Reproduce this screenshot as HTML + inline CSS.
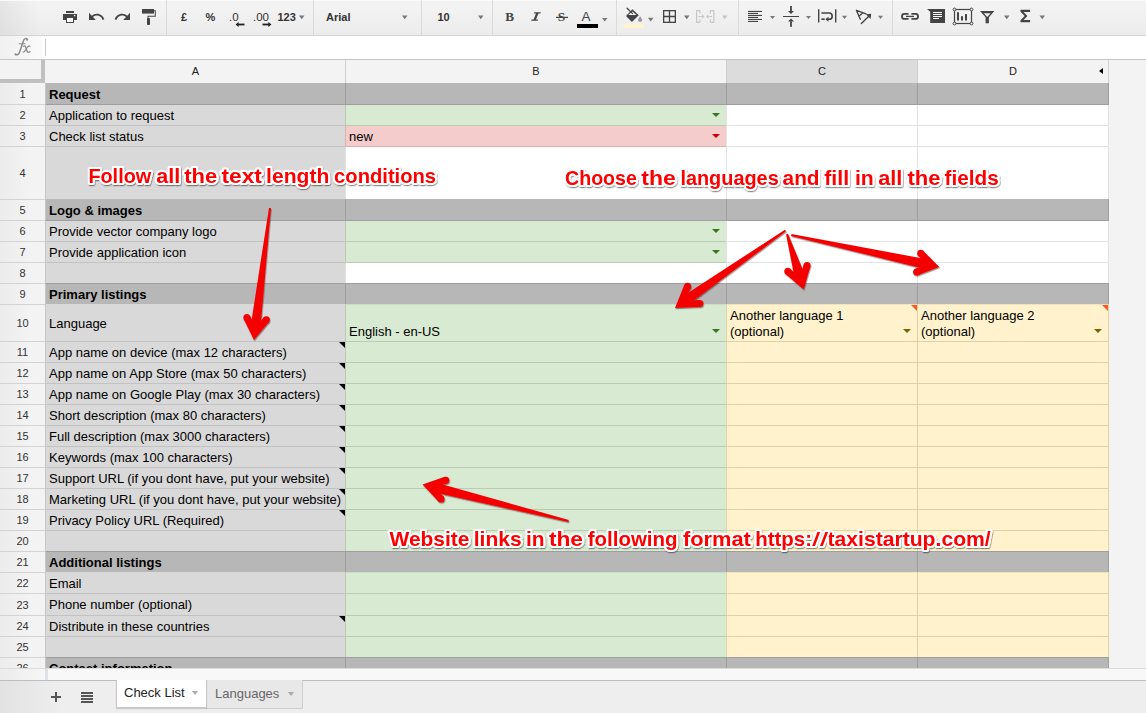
<!DOCTYPE html><html><head><meta charset="utf-8"><style>
*{margin:0;padding:0;box-sizing:border-box}
html,body{width:1146px;height:713px;overflow:hidden;background:#fff;font-family:"Liberation Sans",sans-serif;color:#000}
.a{position:absolute}
.c{position:absolute;overflow:visible;white-space:nowrap}
.t{position:absolute;white-space:nowrap;font-size:13px;line-height:15px}
.rh{position:absolute;left:0;width:45px;text-align:center;font-size:11px;color:#333;line-height:13px}
.ch{position:absolute;top:65px;text-align:center;font-size:11px;color:#222;line-height:13px}
.ann{position:absolute;white-space:nowrap;font-weight:bold;font-size:20px;line-height:24px;color:#f00;
 text-shadow:-1px -1px 0 #fff,1px -1px 0 #fff,-1px 1px 0 #fff,1px 1px 0 #fff,0 -2px 0 #fff,0 2px 0 #fff,-2px 0 0 #fff,2px 0 0 #fff,1px 3px 1px rgba(0,0,0,.35)}
.tb{position:absolute;top:11px;font-size:11px;font-weight:bold;color:#333;line-height:13px}
.dd{position:absolute;width:0;height:0;border-left:3px solid transparent;border-right:3px solid transparent;border-top:3px solid #777}
</style></head><body>

<div class="a" style="left:0;top:0;width:1146px;height:35px;background:linear-gradient(to right,rgba(0,0,0,.06) 0,rgba(0,0,0,0) 40px),linear-gradient(to bottom,#f4f4f4,#ececec)"></div>
<div class="a" style="left:0;top:0;width:1146px;height:1px;background:#fafafa"></div>
<div class="a" style="left:0;top:35px;width:1146px;height:1px;background:#d4d4d4"></div>
<div class="a" style="left:166px;top:0;width:1px;height:35px;background:#dadada"></div>
<div class="a" style="left:313px;top:0;width:1px;height:35px;background:#dadada"></div>
<div class="a" style="left:421px;top:0;width:1px;height:35px;background:#dadada"></div>
<div class="a" style="left:492px;top:0;width:1px;height:35px;background:#dadada"></div>
<div class="a" style="left:616px;top:0;width:1px;height:35px;background:#dadada"></div>
<div class="a" style="left:738px;top:0;width:1px;height:35px;background:#dadada"></div>
<div class="a" style="left:892px;top:0;width:1px;height:35px;background:#dadada"></div>
<div class="a" style="left:0;top:36px;width:1146px;height:23px;background:#fff"></div>
<div class="a" style="left:0;top:36px;width:42px;height:23px;background:linear-gradient(to right,#f0f0f0,#fbfbfb)"></div>
<div class="a" style="left:0;top:59px;width:1146px;height:1px;background:#c6c6c6"></div>
<div class="a" style="left:45px;top:39px;width:1px;height:17px;background:#c8c8c8"></div>
<svg class="a" style="left:0;top:36px" width="45" height="23" viewBox="0 36 45 23"><g fill="none" stroke="#8c8c8c" stroke-linecap="round"><path d="M27.3 39.4C26.4 37.9 24.3 38.2 23.2 41.4L19.9 51.2C19 54.2 17.4 55.5 15.5 54.5" stroke-width="1.5"/><path d="M19.2 43.7H25" stroke-width="1.1"/><path d="M23.5 46.2C24.9 45.3 25.6 46.4 26.1 48.1L26.9 50.8C27.4 52.5 28.6 52.9 30 51.6" stroke-width="1.3"/><path d="M30 46.4C29.4 45.5 28.4 45.9 27.3 47.4L25.3 50.4C24.5 51.7 23.8 52.6 23 51.9" stroke-width="1.1"/></g><circle cx="27.2" cy="39.7" r="1" fill="#8c8c8c"/><circle cx="15.5" cy="54.3" r="1" fill="#8c8c8c"/></svg>
<div class="a" style="left:0;top:60px;width:1146px;height:23px;background:#f3f3f3"></div>
<div class="a" style="left:727px;top:60px;width:190px;height:23px;background:#dcdcdc"></div>
<div class="a" style="left:345px;top:60px;width:1px;height:23px;background:#cfcfcf"></div>
<div class="a" style="left:726px;top:60px;width:1px;height:23px;background:#cfcfcf"></div>
<div class="a" style="left:917px;top:60px;width:1px;height:23px;background:#cfcfcf"></div>
<div class="a" style="left:1108px;top:60px;width:1px;height:23px;background:#cfcfcf"></div>
<div class="ch" style="left:46px;width:299px">A</div>
<div class="ch" style="left:346px;width:380px">B</div>
<div class="ch" style="left:727px;width:190px">C</div>
<div class="ch" style="left:918px;width:190px">D</div>
<div class="a" style="left:1099px;top:68px;width:0;height:0;border-top:3.5px solid transparent;border-bottom:3.5px solid transparent;border-right:4px solid #000"></div>
<div class="a" style="left:0;top:83px;width:45px;height:585px;background:linear-gradient(to right,#ececec 0,#f3f3f3 30px)"></div>
<div class="a" style="left:45px;top:83px;width:1px;height:585px;background:#c6c6c6"></div>
<div class="a" style="left:1109px;top:60px;width:37px;height:608px;background:#f3f3f3"></div>
<div class="a" style="left:1108px;top:60px;width:1px;height:608px;background:#d0d0d0"></div>
<div class="a" style="left:46px;top:83px;width:299px;height:21px;background:#b7b7b7"></div>
<div class="a" style="left:46px;top:104px;width:299px;height:1px;background:#9e9e9e"></div>
<div class="a" style="left:345px;top:83px;width:381px;height:21px;background:#b7b7b7"></div>
<div class="a" style="left:345px;top:83px;width:1px;height:21px;background:#9e9e9e"></div>
<div class="a" style="left:345px;top:104px;width:381px;height:1px;background:#9e9e9e"></div>
<div class="a" style="left:726px;top:83px;width:191px;height:21px;background:#b7b7b7"></div>
<div class="a" style="left:726px;top:83px;width:1px;height:21px;background:#9e9e9e"></div>
<div class="a" style="left:726px;top:104px;width:191px;height:1px;background:#9e9e9e"></div>
<div class="a" style="left:917px;top:83px;width:191px;height:21px;background:#b7b7b7"></div>
<div class="a" style="left:917px;top:83px;width:1px;height:21px;background:#9e9e9e"></div>
<div class="a" style="left:1108px;top:83px;width:1px;height:21px;background:#9e9e9e"></div>
<div class="a" style="left:1108px;top:104px;width:1px;height:1px;background:#9e9e9e"></div>
<div class="a" style="left:917px;top:104px;width:191px;height:1px;background:#9e9e9e"></div>
<div class="a" style="left:46px;top:105px;width:299px;height:20px;background:#d9d9d9"></div>
<div class="a" style="left:46px;top:125px;width:299px;height:1px;background:#c2c2c2"></div>
<div class="a" style="left:345px;top:105px;width:381px;height:20px;background:#d9ead3"></div>
<div class="a" style="left:345px;top:105px;width:1px;height:20px;background:#b9ccb3"></div>
<div class="a" style="left:345px;top:125px;width:381px;height:1px;background:#b9ccb3"></div>
<div class="a" style="left:726px;top:105px;width:191px;height:20px;background:#ffffff"></div>
<div class="a" style="left:726px;top:105px;width:1px;height:20px;background:#e2e3e3"></div>
<div class="a" style="left:726px;top:125px;width:191px;height:1px;background:#e2e3e3"></div>
<div class="a" style="left:917px;top:105px;width:191px;height:20px;background:#ffffff"></div>
<div class="a" style="left:917px;top:105px;width:1px;height:20px;background:#e2e3e3"></div>
<div class="a" style="left:1108px;top:105px;width:1px;height:20px;background:#e2e3e3"></div>
<div class="a" style="left:1108px;top:125px;width:1px;height:1px;background:#e2e3e3"></div>
<div class="a" style="left:917px;top:125px;width:191px;height:1px;background:#e2e3e3"></div>
<div class="a" style="left:46px;top:126px;width:299px;height:20px;background:#d9d9d9"></div>
<div class="a" style="left:46px;top:146px;width:299px;height:1px;background:#c2c2c2"></div>
<div class="a" style="left:345px;top:126px;width:381px;height:20px;background:#f4cccc"></div>
<div class="a" style="left:345px;top:126px;width:1px;height:20px;background:#d9b0b0"></div>
<div class="a" style="left:345px;top:146px;width:381px;height:1px;background:#d9b0b0"></div>
<div class="a" style="left:726px;top:126px;width:191px;height:20px;background:#ffffff"></div>
<div class="a" style="left:726px;top:126px;width:1px;height:20px;background:#e2e3e3"></div>
<div class="a" style="left:726px;top:146px;width:191px;height:1px;background:#e2e3e3"></div>
<div class="a" style="left:917px;top:126px;width:191px;height:20px;background:#ffffff"></div>
<div class="a" style="left:917px;top:126px;width:1px;height:20px;background:#e2e3e3"></div>
<div class="a" style="left:1108px;top:126px;width:1px;height:20px;background:#e2e3e3"></div>
<div class="a" style="left:1108px;top:146px;width:1px;height:1px;background:#e2e3e3"></div>
<div class="a" style="left:917px;top:146px;width:191px;height:1px;background:#e2e3e3"></div>
<div class="a" style="left:46px;top:147px;width:299px;height:52px;background:#d9d9d9"></div>
<div class="a" style="left:345px;top:147px;width:381px;height:52px;background:#ffffff"></div>
<div class="a" style="left:345px;top:147px;width:1px;height:52px;background:#e2e3e3"></div>
<div class="a" style="left:726px;top:147px;width:191px;height:52px;background:#ffffff"></div>
<div class="a" style="left:726px;top:147px;width:1px;height:52px;background:#e2e3e3"></div>
<div class="a" style="left:917px;top:147px;width:191px;height:52px;background:#ffffff"></div>
<div class="a" style="left:917px;top:147px;width:1px;height:52px;background:#e2e3e3"></div>
<div class="a" style="left:1108px;top:147px;width:1px;height:52px;background:#e2e3e3"></div>
<div class="a" style="left:46px;top:199px;width:299px;height:21px;background:#b7b7b7"></div>
<div class="a" style="left:46px;top:220px;width:299px;height:1px;background:#9e9e9e"></div>
<div class="a" style="left:345px;top:199px;width:381px;height:21px;background:#b7b7b7"></div>
<div class="a" style="left:345px;top:199px;width:1px;height:21px;background:#9e9e9e"></div>
<div class="a" style="left:345px;top:220px;width:381px;height:1px;background:#9e9e9e"></div>
<div class="a" style="left:726px;top:199px;width:191px;height:21px;background:#b7b7b7"></div>
<div class="a" style="left:726px;top:199px;width:1px;height:21px;background:#9e9e9e"></div>
<div class="a" style="left:726px;top:220px;width:191px;height:1px;background:#9e9e9e"></div>
<div class="a" style="left:917px;top:199px;width:191px;height:21px;background:#b7b7b7"></div>
<div class="a" style="left:917px;top:199px;width:1px;height:21px;background:#9e9e9e"></div>
<div class="a" style="left:1108px;top:199px;width:1px;height:21px;background:#9e9e9e"></div>
<div class="a" style="left:1108px;top:220px;width:1px;height:1px;background:#9e9e9e"></div>
<div class="a" style="left:917px;top:220px;width:191px;height:1px;background:#9e9e9e"></div>
<div class="a" style="left:46px;top:221px;width:299px;height:20px;background:#d9d9d9"></div>
<div class="a" style="left:46px;top:241px;width:299px;height:1px;background:#c2c2c2"></div>
<div class="a" style="left:345px;top:221px;width:381px;height:20px;background:#d9ead3"></div>
<div class="a" style="left:345px;top:221px;width:1px;height:20px;background:#b9ccb3"></div>
<div class="a" style="left:345px;top:241px;width:381px;height:1px;background:#b9ccb3"></div>
<div class="a" style="left:726px;top:221px;width:191px;height:20px;background:#ffffff"></div>
<div class="a" style="left:726px;top:221px;width:1px;height:20px;background:#e2e3e3"></div>
<div class="a" style="left:726px;top:241px;width:191px;height:1px;background:#e2e3e3"></div>
<div class="a" style="left:917px;top:221px;width:191px;height:20px;background:#ffffff"></div>
<div class="a" style="left:917px;top:221px;width:1px;height:20px;background:#e2e3e3"></div>
<div class="a" style="left:1108px;top:221px;width:1px;height:20px;background:#e2e3e3"></div>
<div class="a" style="left:1108px;top:241px;width:1px;height:1px;background:#e2e3e3"></div>
<div class="a" style="left:917px;top:241px;width:191px;height:1px;background:#e2e3e3"></div>
<div class="a" style="left:46px;top:242px;width:299px;height:20px;background:#d9d9d9"></div>
<div class="a" style="left:46px;top:262px;width:299px;height:1px;background:#c2c2c2"></div>
<div class="a" style="left:345px;top:242px;width:381px;height:20px;background:#d9ead3"></div>
<div class="a" style="left:345px;top:242px;width:1px;height:20px;background:#b9ccb3"></div>
<div class="a" style="left:345px;top:262px;width:381px;height:1px;background:#b9ccb3"></div>
<div class="a" style="left:726px;top:242px;width:191px;height:20px;background:#ffffff"></div>
<div class="a" style="left:726px;top:242px;width:1px;height:20px;background:#e2e3e3"></div>
<div class="a" style="left:726px;top:262px;width:191px;height:1px;background:#e2e3e3"></div>
<div class="a" style="left:917px;top:242px;width:191px;height:20px;background:#ffffff"></div>
<div class="a" style="left:917px;top:242px;width:1px;height:20px;background:#e2e3e3"></div>
<div class="a" style="left:1108px;top:242px;width:1px;height:20px;background:#e2e3e3"></div>
<div class="a" style="left:1108px;top:262px;width:1px;height:1px;background:#e2e3e3"></div>
<div class="a" style="left:917px;top:262px;width:191px;height:1px;background:#e2e3e3"></div>
<div class="a" style="left:46px;top:263px;width:299px;height:20px;background:#d9d9d9"></div>
<div class="a" style="left:46px;top:283px;width:299px;height:1px;background:#9e9e9e"></div>
<div class="a" style="left:345px;top:263px;width:381px;height:20px;background:#ffffff"></div>
<div class="a" style="left:345px;top:263px;width:1px;height:20px;background:#e2e3e3"></div>
<div class="a" style="left:345px;top:283px;width:381px;height:1px;background:#9e9e9e"></div>
<div class="a" style="left:726px;top:263px;width:191px;height:20px;background:#ffffff"></div>
<div class="a" style="left:726px;top:263px;width:1px;height:20px;background:#e2e3e3"></div>
<div class="a" style="left:726px;top:283px;width:191px;height:1px;background:#9e9e9e"></div>
<div class="a" style="left:917px;top:263px;width:191px;height:20px;background:#ffffff"></div>
<div class="a" style="left:917px;top:263px;width:1px;height:20px;background:#e2e3e3"></div>
<div class="a" style="left:1108px;top:263px;width:1px;height:20px;background:#e2e3e3"></div>
<div class="a" style="left:1108px;top:283px;width:1px;height:1px;background:#9e9e9e"></div>
<div class="a" style="left:917px;top:283px;width:191px;height:1px;background:#9e9e9e"></div>
<div class="a" style="left:46px;top:284px;width:299px;height:20px;background:#b7b7b7"></div>
<div class="a" style="left:345px;top:284px;width:381px;height:20px;background:#b7b7b7"></div>
<div class="a" style="left:345px;top:284px;width:1px;height:20px;background:#9e9e9e"></div>
<div class="a" style="left:726px;top:284px;width:191px;height:20px;background:#b7b7b7"></div>
<div class="a" style="left:726px;top:284px;width:1px;height:20px;background:#9e9e9e"></div>
<div class="a" style="left:917px;top:284px;width:191px;height:20px;background:#b7b7b7"></div>
<div class="a" style="left:917px;top:284px;width:1px;height:20px;background:#9e9e9e"></div>
<div class="a" style="left:1108px;top:284px;width:1px;height:20px;background:#9e9e9e"></div>
<div class="a" style="left:46px;top:304px;width:299px;height:37px;background:#d9d9d9"></div>
<div class="a" style="left:46px;top:341px;width:299px;height:1px;background:#c2c2c2"></div>
<div class="a" style="left:345px;top:304px;width:381px;height:37px;background:#d9ead3"></div>
<div class="a" style="left:345px;top:304px;width:1px;height:37px;background:#b9ccb3"></div>
<div class="a" style="left:345px;top:341px;width:381px;height:1px;background:#b9ccb3"></div>
<div class="a" style="left:726px;top:304px;width:191px;height:37px;background:#fff2cc"></div>
<div class="a" style="left:726px;top:304px;width:1px;height:37px;background:#dfd1a8"></div>
<div class="a" style="left:726px;top:341px;width:191px;height:1px;background:#dfd1a8"></div>
<div class="a" style="left:917px;top:304px;width:191px;height:37px;background:#fff2cc"></div>
<div class="a" style="left:917px;top:304px;width:1px;height:37px;background:#dfd1a8"></div>
<div class="a" style="left:1108px;top:304px;width:1px;height:37px;background:#dfd1a8"></div>
<div class="a" style="left:1108px;top:341px;width:1px;height:1px;background:#dfd1a8"></div>
<div class="a" style="left:917px;top:341px;width:191px;height:1px;background:#dfd1a8"></div>
<div class="a" style="left:345px;top:304px;width:381px;height:1px;background:#b9ccb3;opacity:.45"></div>
<div class="a" style="left:726px;top:304px;width:191px;height:1px;background:#dfd1a8;opacity:.45"></div>
<div class="a" style="left:917px;top:304px;width:191px;height:1px;background:#dfd1a8;opacity:.45"></div>
<div class="a" style="left:46px;top:342px;width:299px;height:20px;background:#d9d9d9"></div>
<div class="a" style="left:46px;top:362px;width:299px;height:1px;background:#c2c2c2"></div>
<div class="a" style="left:345px;top:342px;width:381px;height:20px;background:#d9ead3"></div>
<div class="a" style="left:345px;top:342px;width:1px;height:20px;background:#b9ccb3"></div>
<div class="a" style="left:345px;top:362px;width:381px;height:1px;background:#b9ccb3"></div>
<div class="a" style="left:726px;top:342px;width:191px;height:20px;background:#fff2cc"></div>
<div class="a" style="left:726px;top:342px;width:1px;height:20px;background:#dfd1a8"></div>
<div class="a" style="left:726px;top:362px;width:191px;height:1px;background:#dfd1a8"></div>
<div class="a" style="left:917px;top:342px;width:191px;height:20px;background:#fff2cc"></div>
<div class="a" style="left:917px;top:342px;width:1px;height:20px;background:#dfd1a8"></div>
<div class="a" style="left:1108px;top:342px;width:1px;height:20px;background:#dfd1a8"></div>
<div class="a" style="left:1108px;top:362px;width:1px;height:1px;background:#dfd1a8"></div>
<div class="a" style="left:917px;top:362px;width:191px;height:1px;background:#dfd1a8"></div>
<div class="a" style="left:46px;top:363px;width:299px;height:20px;background:#d9d9d9"></div>
<div class="a" style="left:46px;top:383px;width:299px;height:1px;background:#c2c2c2"></div>
<div class="a" style="left:345px;top:363px;width:381px;height:20px;background:#d9ead3"></div>
<div class="a" style="left:345px;top:363px;width:1px;height:20px;background:#b9ccb3"></div>
<div class="a" style="left:345px;top:383px;width:381px;height:1px;background:#b9ccb3"></div>
<div class="a" style="left:726px;top:363px;width:191px;height:20px;background:#fff2cc"></div>
<div class="a" style="left:726px;top:363px;width:1px;height:20px;background:#dfd1a8"></div>
<div class="a" style="left:726px;top:383px;width:191px;height:1px;background:#dfd1a8"></div>
<div class="a" style="left:917px;top:363px;width:191px;height:20px;background:#fff2cc"></div>
<div class="a" style="left:917px;top:363px;width:1px;height:20px;background:#dfd1a8"></div>
<div class="a" style="left:1108px;top:363px;width:1px;height:20px;background:#dfd1a8"></div>
<div class="a" style="left:1108px;top:383px;width:1px;height:1px;background:#dfd1a8"></div>
<div class="a" style="left:917px;top:383px;width:191px;height:1px;background:#dfd1a8"></div>
<div class="a" style="left:46px;top:384px;width:299px;height:20px;background:#d9d9d9"></div>
<div class="a" style="left:46px;top:404px;width:299px;height:1px;background:#c2c2c2"></div>
<div class="a" style="left:345px;top:384px;width:381px;height:20px;background:#d9ead3"></div>
<div class="a" style="left:345px;top:384px;width:1px;height:20px;background:#b9ccb3"></div>
<div class="a" style="left:345px;top:404px;width:381px;height:1px;background:#b9ccb3"></div>
<div class="a" style="left:726px;top:384px;width:191px;height:20px;background:#fff2cc"></div>
<div class="a" style="left:726px;top:384px;width:1px;height:20px;background:#dfd1a8"></div>
<div class="a" style="left:726px;top:404px;width:191px;height:1px;background:#dfd1a8"></div>
<div class="a" style="left:917px;top:384px;width:191px;height:20px;background:#fff2cc"></div>
<div class="a" style="left:917px;top:384px;width:1px;height:20px;background:#dfd1a8"></div>
<div class="a" style="left:1108px;top:384px;width:1px;height:20px;background:#dfd1a8"></div>
<div class="a" style="left:1108px;top:404px;width:1px;height:1px;background:#dfd1a8"></div>
<div class="a" style="left:917px;top:404px;width:191px;height:1px;background:#dfd1a8"></div>
<div class="a" style="left:46px;top:405px;width:299px;height:20px;background:#d9d9d9"></div>
<div class="a" style="left:46px;top:425px;width:299px;height:1px;background:#c2c2c2"></div>
<div class="a" style="left:345px;top:405px;width:381px;height:20px;background:#d9ead3"></div>
<div class="a" style="left:345px;top:405px;width:1px;height:20px;background:#b9ccb3"></div>
<div class="a" style="left:345px;top:425px;width:381px;height:1px;background:#b9ccb3"></div>
<div class="a" style="left:726px;top:405px;width:191px;height:20px;background:#fff2cc"></div>
<div class="a" style="left:726px;top:405px;width:1px;height:20px;background:#dfd1a8"></div>
<div class="a" style="left:726px;top:425px;width:191px;height:1px;background:#dfd1a8"></div>
<div class="a" style="left:917px;top:405px;width:191px;height:20px;background:#fff2cc"></div>
<div class="a" style="left:917px;top:405px;width:1px;height:20px;background:#dfd1a8"></div>
<div class="a" style="left:1108px;top:405px;width:1px;height:20px;background:#dfd1a8"></div>
<div class="a" style="left:1108px;top:425px;width:1px;height:1px;background:#dfd1a8"></div>
<div class="a" style="left:917px;top:425px;width:191px;height:1px;background:#dfd1a8"></div>
<div class="a" style="left:46px;top:426px;width:299px;height:20px;background:#d9d9d9"></div>
<div class="a" style="left:46px;top:446px;width:299px;height:1px;background:#c2c2c2"></div>
<div class="a" style="left:345px;top:426px;width:381px;height:20px;background:#d9ead3"></div>
<div class="a" style="left:345px;top:426px;width:1px;height:20px;background:#b9ccb3"></div>
<div class="a" style="left:345px;top:446px;width:381px;height:1px;background:#b9ccb3"></div>
<div class="a" style="left:726px;top:426px;width:191px;height:20px;background:#fff2cc"></div>
<div class="a" style="left:726px;top:426px;width:1px;height:20px;background:#dfd1a8"></div>
<div class="a" style="left:726px;top:446px;width:191px;height:1px;background:#dfd1a8"></div>
<div class="a" style="left:917px;top:426px;width:191px;height:20px;background:#fff2cc"></div>
<div class="a" style="left:917px;top:426px;width:1px;height:20px;background:#dfd1a8"></div>
<div class="a" style="left:1108px;top:426px;width:1px;height:20px;background:#dfd1a8"></div>
<div class="a" style="left:1108px;top:446px;width:1px;height:1px;background:#dfd1a8"></div>
<div class="a" style="left:917px;top:446px;width:191px;height:1px;background:#dfd1a8"></div>
<div class="a" style="left:46px;top:447px;width:299px;height:20px;background:#d9d9d9"></div>
<div class="a" style="left:46px;top:467px;width:299px;height:1px;background:#c2c2c2"></div>
<div class="a" style="left:345px;top:447px;width:381px;height:20px;background:#d9ead3"></div>
<div class="a" style="left:345px;top:447px;width:1px;height:20px;background:#b9ccb3"></div>
<div class="a" style="left:345px;top:467px;width:381px;height:1px;background:#b9ccb3"></div>
<div class="a" style="left:726px;top:447px;width:191px;height:20px;background:#fff2cc"></div>
<div class="a" style="left:726px;top:447px;width:1px;height:20px;background:#dfd1a8"></div>
<div class="a" style="left:726px;top:467px;width:191px;height:1px;background:#dfd1a8"></div>
<div class="a" style="left:917px;top:447px;width:191px;height:20px;background:#fff2cc"></div>
<div class="a" style="left:917px;top:447px;width:1px;height:20px;background:#dfd1a8"></div>
<div class="a" style="left:1108px;top:447px;width:1px;height:20px;background:#dfd1a8"></div>
<div class="a" style="left:1108px;top:467px;width:1px;height:1px;background:#dfd1a8"></div>
<div class="a" style="left:917px;top:467px;width:191px;height:1px;background:#dfd1a8"></div>
<div class="a" style="left:46px;top:468px;width:299px;height:20px;background:#d9d9d9"></div>
<div class="a" style="left:46px;top:488px;width:299px;height:1px;background:#c2c2c2"></div>
<div class="a" style="left:345px;top:468px;width:381px;height:20px;background:#d9ead3"></div>
<div class="a" style="left:345px;top:468px;width:1px;height:20px;background:#b9ccb3"></div>
<div class="a" style="left:345px;top:488px;width:381px;height:1px;background:#b9ccb3"></div>
<div class="a" style="left:726px;top:468px;width:191px;height:20px;background:#fff2cc"></div>
<div class="a" style="left:726px;top:468px;width:1px;height:20px;background:#dfd1a8"></div>
<div class="a" style="left:726px;top:488px;width:191px;height:1px;background:#dfd1a8"></div>
<div class="a" style="left:917px;top:468px;width:191px;height:20px;background:#fff2cc"></div>
<div class="a" style="left:917px;top:468px;width:1px;height:20px;background:#dfd1a8"></div>
<div class="a" style="left:1108px;top:468px;width:1px;height:20px;background:#dfd1a8"></div>
<div class="a" style="left:1108px;top:488px;width:1px;height:1px;background:#dfd1a8"></div>
<div class="a" style="left:917px;top:488px;width:191px;height:1px;background:#dfd1a8"></div>
<div class="a" style="left:46px;top:489px;width:299px;height:20px;background:#d9d9d9"></div>
<div class="a" style="left:46px;top:509px;width:299px;height:1px;background:#c2c2c2"></div>
<div class="a" style="left:345px;top:489px;width:381px;height:20px;background:#d9ead3"></div>
<div class="a" style="left:345px;top:489px;width:1px;height:20px;background:#b9ccb3"></div>
<div class="a" style="left:345px;top:509px;width:381px;height:1px;background:#b9ccb3"></div>
<div class="a" style="left:726px;top:489px;width:191px;height:20px;background:#fff2cc"></div>
<div class="a" style="left:726px;top:489px;width:1px;height:20px;background:#dfd1a8"></div>
<div class="a" style="left:726px;top:509px;width:191px;height:1px;background:#dfd1a8"></div>
<div class="a" style="left:917px;top:489px;width:191px;height:20px;background:#fff2cc"></div>
<div class="a" style="left:917px;top:489px;width:1px;height:20px;background:#dfd1a8"></div>
<div class="a" style="left:1108px;top:489px;width:1px;height:20px;background:#dfd1a8"></div>
<div class="a" style="left:1108px;top:509px;width:1px;height:1px;background:#dfd1a8"></div>
<div class="a" style="left:917px;top:509px;width:191px;height:1px;background:#dfd1a8"></div>
<div class="a" style="left:46px;top:510px;width:299px;height:20px;background:#d9d9d9"></div>
<div class="a" style="left:46px;top:530px;width:299px;height:1px;background:#c2c2c2"></div>
<div class="a" style="left:345px;top:510px;width:381px;height:20px;background:#d9ead3"></div>
<div class="a" style="left:345px;top:510px;width:1px;height:20px;background:#b9ccb3"></div>
<div class="a" style="left:345px;top:530px;width:381px;height:1px;background:#b9ccb3"></div>
<div class="a" style="left:726px;top:510px;width:191px;height:20px;background:#fff2cc"></div>
<div class="a" style="left:726px;top:510px;width:1px;height:20px;background:#dfd1a8"></div>
<div class="a" style="left:726px;top:530px;width:191px;height:1px;background:#dfd1a8"></div>
<div class="a" style="left:917px;top:510px;width:191px;height:20px;background:#fff2cc"></div>
<div class="a" style="left:917px;top:510px;width:1px;height:20px;background:#dfd1a8"></div>
<div class="a" style="left:1108px;top:510px;width:1px;height:20px;background:#dfd1a8"></div>
<div class="a" style="left:1108px;top:530px;width:1px;height:1px;background:#dfd1a8"></div>
<div class="a" style="left:917px;top:530px;width:191px;height:1px;background:#dfd1a8"></div>
<div class="a" style="left:46px;top:531px;width:299px;height:20px;background:#d9d9d9"></div>
<div class="a" style="left:46px;top:551px;width:299px;height:1px;background:#9e9e9e"></div>
<div class="a" style="left:345px;top:531px;width:381px;height:20px;background:#d9ead3"></div>
<div class="a" style="left:345px;top:531px;width:1px;height:20px;background:#b9ccb3"></div>
<div class="a" style="left:345px;top:551px;width:381px;height:1px;background:#9e9e9e"></div>
<div class="a" style="left:726px;top:531px;width:191px;height:20px;background:#fff2cc"></div>
<div class="a" style="left:726px;top:531px;width:1px;height:20px;background:#dfd1a8"></div>
<div class="a" style="left:726px;top:551px;width:191px;height:1px;background:#9e9e9e"></div>
<div class="a" style="left:917px;top:531px;width:191px;height:20px;background:#fff2cc"></div>
<div class="a" style="left:917px;top:531px;width:1px;height:20px;background:#dfd1a8"></div>
<div class="a" style="left:1108px;top:531px;width:1px;height:20px;background:#dfd1a8"></div>
<div class="a" style="left:1108px;top:551px;width:1px;height:1px;background:#9e9e9e"></div>
<div class="a" style="left:917px;top:551px;width:191px;height:1px;background:#9e9e9e"></div>
<div class="a" style="left:46px;top:552px;width:299px;height:20px;background:#b7b7b7"></div>
<div class="a" style="left:345px;top:552px;width:381px;height:20px;background:#b7b7b7"></div>
<div class="a" style="left:345px;top:552px;width:1px;height:20px;background:#9e9e9e"></div>
<div class="a" style="left:726px;top:552px;width:191px;height:20px;background:#b7b7b7"></div>
<div class="a" style="left:726px;top:552px;width:1px;height:20px;background:#9e9e9e"></div>
<div class="a" style="left:917px;top:552px;width:191px;height:20px;background:#b7b7b7"></div>
<div class="a" style="left:917px;top:552px;width:1px;height:20px;background:#9e9e9e"></div>
<div class="a" style="left:1108px;top:552px;width:1px;height:20px;background:#9e9e9e"></div>
<div class="a" style="left:46px;top:572px;width:299px;height:21px;background:#d9d9d9"></div>
<div class="a" style="left:46px;top:593px;width:299px;height:1px;background:#c2c2c2"></div>
<div class="a" style="left:345px;top:572px;width:381px;height:21px;background:#d9ead3"></div>
<div class="a" style="left:345px;top:572px;width:1px;height:21px;background:#b9ccb3"></div>
<div class="a" style="left:345px;top:593px;width:381px;height:1px;background:#b9ccb3"></div>
<div class="a" style="left:726px;top:572px;width:191px;height:21px;background:#fff2cc"></div>
<div class="a" style="left:726px;top:572px;width:1px;height:21px;background:#dfd1a8"></div>
<div class="a" style="left:726px;top:593px;width:191px;height:1px;background:#dfd1a8"></div>
<div class="a" style="left:917px;top:572px;width:191px;height:21px;background:#fff2cc"></div>
<div class="a" style="left:917px;top:572px;width:1px;height:21px;background:#dfd1a8"></div>
<div class="a" style="left:1108px;top:572px;width:1px;height:21px;background:#dfd1a8"></div>
<div class="a" style="left:1108px;top:593px;width:1px;height:1px;background:#dfd1a8"></div>
<div class="a" style="left:917px;top:593px;width:191px;height:1px;background:#dfd1a8"></div>
<div class="a" style="left:345px;top:572px;width:381px;height:1px;background:#b9ccb3;opacity:.45"></div>
<div class="a" style="left:726px;top:572px;width:191px;height:1px;background:#dfd1a8;opacity:.45"></div>
<div class="a" style="left:917px;top:572px;width:191px;height:1px;background:#dfd1a8;opacity:.45"></div>
<div class="a" style="left:46px;top:594px;width:299px;height:21px;background:#d9d9d9"></div>
<div class="a" style="left:46px;top:615px;width:299px;height:1px;background:#c2c2c2"></div>
<div class="a" style="left:345px;top:594px;width:381px;height:21px;background:#d9ead3"></div>
<div class="a" style="left:345px;top:594px;width:1px;height:21px;background:#b9ccb3"></div>
<div class="a" style="left:345px;top:615px;width:381px;height:1px;background:#b9ccb3"></div>
<div class="a" style="left:726px;top:594px;width:191px;height:21px;background:#fff2cc"></div>
<div class="a" style="left:726px;top:594px;width:1px;height:21px;background:#dfd1a8"></div>
<div class="a" style="left:726px;top:615px;width:191px;height:1px;background:#dfd1a8"></div>
<div class="a" style="left:917px;top:594px;width:191px;height:21px;background:#fff2cc"></div>
<div class="a" style="left:917px;top:594px;width:1px;height:21px;background:#dfd1a8"></div>
<div class="a" style="left:1108px;top:594px;width:1px;height:21px;background:#dfd1a8"></div>
<div class="a" style="left:1108px;top:615px;width:1px;height:1px;background:#dfd1a8"></div>
<div class="a" style="left:917px;top:615px;width:191px;height:1px;background:#dfd1a8"></div>
<div class="a" style="left:46px;top:616px;width:299px;height:20px;background:#d9d9d9"></div>
<div class="a" style="left:46px;top:636px;width:299px;height:1px;background:#c2c2c2"></div>
<div class="a" style="left:345px;top:616px;width:381px;height:20px;background:#d9ead3"></div>
<div class="a" style="left:345px;top:616px;width:1px;height:20px;background:#b9ccb3"></div>
<div class="a" style="left:345px;top:636px;width:381px;height:1px;background:#b9ccb3"></div>
<div class="a" style="left:726px;top:616px;width:191px;height:20px;background:#fff2cc"></div>
<div class="a" style="left:726px;top:616px;width:1px;height:20px;background:#dfd1a8"></div>
<div class="a" style="left:726px;top:636px;width:191px;height:1px;background:#dfd1a8"></div>
<div class="a" style="left:917px;top:616px;width:191px;height:20px;background:#fff2cc"></div>
<div class="a" style="left:917px;top:616px;width:1px;height:20px;background:#dfd1a8"></div>
<div class="a" style="left:1108px;top:616px;width:1px;height:20px;background:#dfd1a8"></div>
<div class="a" style="left:1108px;top:636px;width:1px;height:1px;background:#dfd1a8"></div>
<div class="a" style="left:917px;top:636px;width:191px;height:1px;background:#dfd1a8"></div>
<div class="a" style="left:46px;top:637px;width:299px;height:20px;background:#d9d9d9"></div>
<div class="a" style="left:46px;top:657px;width:299px;height:1px;background:#9e9e9e"></div>
<div class="a" style="left:345px;top:637px;width:381px;height:20px;background:#d9ead3"></div>
<div class="a" style="left:345px;top:637px;width:1px;height:20px;background:#b9ccb3"></div>
<div class="a" style="left:345px;top:657px;width:381px;height:1px;background:#9e9e9e"></div>
<div class="a" style="left:726px;top:637px;width:191px;height:20px;background:#fff2cc"></div>
<div class="a" style="left:726px;top:637px;width:1px;height:20px;background:#dfd1a8"></div>
<div class="a" style="left:726px;top:657px;width:191px;height:1px;background:#9e9e9e"></div>
<div class="a" style="left:917px;top:637px;width:191px;height:20px;background:#fff2cc"></div>
<div class="a" style="left:917px;top:637px;width:1px;height:20px;background:#dfd1a8"></div>
<div class="a" style="left:1108px;top:637px;width:1px;height:20px;background:#dfd1a8"></div>
<div class="a" style="left:1108px;top:657px;width:1px;height:1px;background:#9e9e9e"></div>
<div class="a" style="left:917px;top:657px;width:191px;height:1px;background:#9e9e9e"></div>
<div class="a" style="left:46px;top:658px;width:299px;height:10px;background:#b7b7b7"></div>
<div class="a" style="left:345px;top:658px;width:381px;height:10px;background:#b7b7b7"></div>
<div class="a" style="left:345px;top:658px;width:1px;height:10px;background:#9e9e9e"></div>
<div class="a" style="left:726px;top:658px;width:191px;height:10px;background:#b7b7b7"></div>
<div class="a" style="left:726px;top:658px;width:1px;height:10px;background:#9e9e9e"></div>
<div class="a" style="left:917px;top:658px;width:191px;height:10px;background:#b7b7b7"></div>
<div class="a" style="left:917px;top:658px;width:1px;height:10px;background:#9e9e9e"></div>
<div class="a" style="left:1108px;top:658px;width:1px;height:10px;background:#9e9e9e"></div>
<div class="a" style="left:0;top:104px;width:45px;height:1px;background:#d3d3d3"></div>
<div class="rh" style="top:88px">1</div>
<div class="a" style="left:0;top:125px;width:45px;height:1px;background:#d3d3d3"></div>
<div class="rh" style="top:109px">2</div>
<div class="a" style="left:0;top:146px;width:45px;height:1px;background:#d3d3d3"></div>
<div class="rh" style="top:130px">3</div>
<div class="a" style="left:0;top:199px;width:45px;height:1px;background:#d3d3d3"></div>
<div class="rh" style="top:167px">4</div>
<div class="a" style="left:0;top:220px;width:45px;height:1px;background:#d3d3d3"></div>
<div class="rh" style="top:204px">5</div>
<div class="a" style="left:0;top:241px;width:45px;height:1px;background:#d3d3d3"></div>
<div class="rh" style="top:225px">6</div>
<div class="a" style="left:0;top:262px;width:45px;height:1px;background:#d3d3d3"></div>
<div class="rh" style="top:246px">7</div>
<div class="a" style="left:0;top:283px;width:45px;height:1px;background:#d3d3d3"></div>
<div class="rh" style="top:267px">8</div>
<div class="a" style="left:0;top:304px;width:45px;height:1px;background:#d3d3d3"></div>
<div class="rh" style="top:288px">9</div>
<div class="a" style="left:0;top:341px;width:45px;height:1px;background:#d3d3d3"></div>
<div class="rh" style="top:317px">10</div>
<div class="a" style="left:0;top:362px;width:45px;height:1px;background:#d3d3d3"></div>
<div class="rh" style="top:346px">11</div>
<div class="a" style="left:0;top:383px;width:45px;height:1px;background:#d3d3d3"></div>
<div class="rh" style="top:367px">12</div>
<div class="a" style="left:0;top:404px;width:45px;height:1px;background:#d3d3d3"></div>
<div class="rh" style="top:388px">13</div>
<div class="a" style="left:0;top:425px;width:45px;height:1px;background:#d3d3d3"></div>
<div class="rh" style="top:409px">14</div>
<div class="a" style="left:0;top:446px;width:45px;height:1px;background:#d3d3d3"></div>
<div class="rh" style="top:430px">15</div>
<div class="a" style="left:0;top:467px;width:45px;height:1px;background:#d3d3d3"></div>
<div class="rh" style="top:451px">16</div>
<div class="a" style="left:0;top:488px;width:45px;height:1px;background:#d3d3d3"></div>
<div class="rh" style="top:472px">17</div>
<div class="a" style="left:0;top:509px;width:45px;height:1px;background:#d3d3d3"></div>
<div class="rh" style="top:493px">18</div>
<div class="a" style="left:0;top:530px;width:45px;height:1px;background:#d3d3d3"></div>
<div class="rh" style="top:514px">19</div>
<div class="a" style="left:0;top:551px;width:45px;height:1px;background:#d3d3d3"></div>
<div class="rh" style="top:535px">20</div>
<div class="a" style="left:0;top:572px;width:45px;height:1px;background:#d3d3d3"></div>
<div class="rh" style="top:556px">21</div>
<div class="a" style="left:0;top:593px;width:45px;height:1px;background:#d3d3d3"></div>
<div class="rh" style="top:577px">22</div>
<div class="a" style="left:0;top:615px;width:45px;height:1px;background:#d3d3d3"></div>
<div class="rh" style="top:599px">23</div>
<div class="a" style="left:0;top:636px;width:45px;height:1px;background:#d3d3d3"></div>
<div class="rh" style="top:620px">24</div>
<div class="a" style="left:0;top:657px;width:45px;height:1px;background:#d3d3d3"></div>
<div class="rh" style="top:641px">25</div>
<div class="a" style="left:0;top:678px;width:45px;height:1px;background:#d3d3d3"></div>
<div class="rh" style="top:662px">26</div>
<div class="a" style="left:41px;top:60px;width:4px;height:23px;background:#c0c0c0"></div>
<div class="a" style="left:0;top:79px;width:45px;height:4px;background:#c0c0c0"></div>
<div class="t" style="left:49px;top:87px;font-weight:bold;">Request</div>
<div class="t" style="left:49px;top:108px;">Application to request</div>
<div class="t" style="left:49px;top:129px;">Check list status</div>
<div class="t" style="left:349px;top:129px;">new</div>
<div class="t" style="left:49px;top:203px;font-weight:bold;">Logo &amp; images</div>
<div class="t" style="left:49px;top:224px;">Provide vector company logo</div>
<div class="t" style="left:49px;top:245px;">Provide application icon</div>
<div class="t" style="left:49px;top:287px;font-weight:bold;">Primary listings</div>
<div class="t" style="left:49px;top:345px;">App name on device (max 12 characters)</div>
<div class="t" style="left:49px;top:366px;">App name on App Store (max 50 characters)</div>
<div class="t" style="left:49px;top:387px;">App name on Google Play (max 30 characters)</div>
<div class="t" style="left:49px;top:408px;">Short description (max 80 characters)</div>
<div class="t" style="left:49px;top:429px;">Full description (max 3000 characters)</div>
<div class="t" style="left:49px;top:450px;">Keywords (max 100 characters)</div>
<div class="t" style="left:49px;top:471px;">Support URL (if you dont have, put your website)</div>
<div class="t" style="left:49px;top:492px;">Marketing URL (if you dont have, put your website)</div>
<div class="t" style="left:49px;top:513px;">Privacy Policy URL (Required)</div>
<div class="t" style="left:49px;top:555px;font-weight:bold;">Additional listings</div>
<div class="t" style="left:49px;top:576px;">Email</div>
<div class="t" style="left:49px;top:597px;">Phone number (optional)</div>
<div class="t" style="left:49px;top:619px;">Distribute in these countries</div>
<div class="t" style="left:49px;top:661px;font-weight:bold;">Contact information</div>
<div class="t" style="left:49px;top:316px">Language</div>
<div class="t" style="left:349px;top:324px">English - en-US</div>
<div class="t" style="left:730px;top:307.5px;line-height:16px">Another language 1<br>(optional)</div>
<div class="t" style="left:921px;top:307.5px;line-height:16px">Another language 2<br>(optional)</div>
<div class="a" style="left:712px;top:113px;width:0;height:0;border-left:4px solid transparent;border-right:4px solid transparent;border-top:4px solid #38761d"></div>
<div class="a" style="left:712px;top:134px;width:0;height:0;border-left:4px solid transparent;border-right:4px solid transparent;border-top:4px solid #cc0000"></div>
<div class="a" style="left:712px;top:229px;width:0;height:0;border-left:4px solid transparent;border-right:4px solid transparent;border-top:4px solid #38761d"></div>
<div class="a" style="left:712px;top:250px;width:0;height:0;border-left:4px solid transparent;border-right:4px solid transparent;border-top:4px solid #38761d"></div>
<div class="a" style="left:712px;top:329px;width:0;height:0;border-left:4px solid transparent;border-right:4px solid transparent;border-top:4px solid #38761d"></div>
<div class="a" style="left:903px;top:329px;width:0;height:0;border-left:4px solid transparent;border-right:4px solid transparent;border-top:4px solid #7f6000"></div>
<div class="a" style="left:911px;top:305px;width:0;height:0;border-left:6px solid transparent;border-top:6px solid #ff5722"></div>
<div class="a" style="left:1094px;top:329px;width:0;height:0;border-left:4px solid transparent;border-right:4px solid transparent;border-top:4px solid #7f6000"></div>
<div class="a" style="left:1102px;top:305px;width:0;height:0;border-left:6px solid transparent;border-top:6px solid #ff5722"></div>
<div class="a" style="left:339px;top:342px;width:0;height:0;border-left:6px solid transparent;border-top:6px solid #000"></div>
<div class="a" style="left:339px;top:363px;width:0;height:0;border-left:6px solid transparent;border-top:6px solid #000"></div>
<div class="a" style="left:339px;top:384px;width:0;height:0;border-left:6px solid transparent;border-top:6px solid #000"></div>
<div class="a" style="left:339px;top:405px;width:0;height:0;border-left:6px solid transparent;border-top:6px solid #000"></div>
<div class="a" style="left:339px;top:426px;width:0;height:0;border-left:6px solid transparent;border-top:6px solid #000"></div>
<div class="a" style="left:339px;top:447px;width:0;height:0;border-left:6px solid transparent;border-top:6px solid #000"></div>
<div class="a" style="left:339px;top:468px;width:0;height:0;border-left:6px solid transparent;border-top:6px solid #000"></div>
<div class="a" style="left:339px;top:489px;width:0;height:0;border-left:6px solid transparent;border-top:6px solid #000"></div>
<div class="a" style="left:339px;top:510px;width:0;height:0;border-left:6px solid transparent;border-top:6px solid #000"></div>
<div class="a" style="left:339px;top:616px;width:0;height:0;border-left:6px solid transparent;border-top:6px solid #000"></div>
<div class="a" style="left:0;top:668px;width:1146px;height:12px;background:#f8f8f8"></div>
<div class="a" style="left:0;top:669px;width:45px;height:11px;background:linear-gradient(to right,#ececec,#f6f6f6)"></div>
<div class="a" style="left:45px;top:669px;width:3px;height:11px;background:#dde2e8"></div>
<div class="a" style="left:0;top:668px;width:1146px;height:1px;background:#dcdcdc"></div>
<div class="a" style="left:0;top:680px;width:1146px;height:33px;background:linear-gradient(to right,#e2e2e2 0,#eeeeee 60px,#eeeeee 100%)"></div>
<div class="a" style="left:0;top:680px;width:1146px;height:1px;background:#bdbdbd"></div>
<div class="a" style="left:206px;top:680px;width:97px;height:29px;background:#e8e8e8;border:1px solid #cfcfcf;border-top:none"></div>
<div class="a" style="left:116px;top:680px;width:91px;height:28px;background:#fff;border:1px solid #c8c8c8;border-top:none;box-shadow:0 1px 1px rgba(0,0,0,.15)"></div>
<div class="a" style="left:124px;top:685px;font-size:13px;line-height:15px;color:#222">Check List</div>
<div class="a" style="left:215px;top:686px;font-size:13px;line-height:15px;color:#666">Languages</div>
<div class="dd" style="left:192px;top:691px;border-left-width:3.5px;border-right-width:3.5px;border-top-width:4px;border-top-color:#aaa"></div>
<div class="dd" style="left:288px;top:692px;border-left-width:3.5px;border-right-width:3.5px;border-top-width:4px;border-top-color:#aaa"></div>
<div class="a" style="left:51px;top:696px;width:10px;height:2px;background:#555"></div>
<div class="a" style="left:55px;top:692px;width:2px;height:10px;background:#555"></div>
<div class="a" style="left:81px;top:692px;width:12px;height:2px;background:#555"></div>
<div class="a" style="left:81px;top:695px;width:12px;height:2px;background:#555"></div>
<div class="a" style="left:81px;top:698px;width:12px;height:2px;background:#555"></div>
<div class="a" style="left:81px;top:701px;width:12px;height:2px;background:#555"></div><svg class="a" style="left:0;top:0" width="1146" height="35" viewBox="0 0 1146 35">
<g fill="#444"><rect x="66" y="11" width="8" height="2"/><path d="M63 14h14v6h-3v-3h-8v3h-3z"/><rect x="66" y="17" width="8" height="6"/></g>
<rect x="67" y="18" width="6" height="4" fill="#fff"/><circle cx="74.6" cy="15.6" r=".8" fill="#fff"/>
<path transform="translate(87.5 7.4) scale(0.75 0.78)" fill="#444" d="M12.5 8c-2.65 0-5.05.99-6.9 2.6L2 7v9h9l-3.62-3.62c1.39-1.16 3.16-1.88 5.12-1.88 3.54 0 6.55 2.31 7.6 5.5l2.37-.78C21.08 11.03 17.15 8 12.5 8z"/>
<path transform="translate(131.5 7.4) scale(-0.75 0.78)" fill="#444" d="M12.5 8c-2.65 0-5.05.99-6.9 2.6L2 7v9h9l-3.62-3.62c1.39-1.16 3.16-1.88 5.12-1.88 3.54 0 6.55 2.31 7.6 5.5l2.37-.78C21.08 11.03 17.15 8 12.5 8z"/>
<g fill="#444"><rect x="142" y="9" width="12" height="4.6"/><path d="M153.5 10.3h2.3v6.5h-7.3v1.6h-1v-2.6h7.3v-4.5h-1.3z"/><rect x="147" y="18" width="3" height="7" rx=".8"/></g>
<g font-family="Liberation Sans" font-weight="bold" font-size="11" fill="#333">
<text x="181" y="21">£</text><text x="205.5" y="21">%</text>
<text x="277.5" y="21">123</text>
<text x="326" y="21">Arial</text><text x="437.5" y="21">10</text></g>
<g font-family="Liberation Sans" font-size="11.5" fill="#333"><text x="229" y="21">.0</text><text x="253" y="21">.00</text></g>
<g fill="#222"><path d="M237.5 23.6h7v1.8h-7z"/><path d="M235.6 24.5l3-2.6v5.2z"/><path d="M262.5 23.6h7v1.8h-7z"/><path d="M271.4 24.5l-3-2.6v5.2z"/></g>
<path d="M299 15.6h5.5l-2.75 3.6z" fill="#777"/>
<path d="M402 15.6h5.5l-2.75 3.6z" fill="#777"/>
<path d="M478 15.6h5.5l-2.75 3.6z" fill="#777"/>
<text x="505.3" y="20.8" font-family="Liberation Serif" font-weight="bold" font-size="13.2" fill="#444">B</text>
<g fill="#444"><path d="M534.2 12.2h6.6l-.3 1.3h-2.1l-2.4 6h2l-.3 1.3h-6.5l.3-1.3h2.1l2.4-6h-2z"/></g>
<text x="557.8" y="21.3" font-family="Liberation Serif" font-weight="bold" font-size="13.5" fill="#444">S</text><rect x="556" y="16.8" width="12" height="1.2" fill="#444"/>
<text x="581.5" y="20.8" font-family="Liberation Sans" font-size="13.5" fill="#444">A</text><rect x="577" y="24" width="21" height="4" fill="#000"/>
<path d="M602 18h5.5l-2.75 3.6z" fill="#777"/>
<path d="M632.4 9.3L638.8 15.3L631.9 21.9L626 15.9Z" fill="#444"/>
<path d="M632.4 11.4L636.3 15.1H628.4Z" fill="#fff"/>
<path d="M627.1 8.2L632.6 13.6" stroke="#444" stroke-width="1.3" stroke-linecap="round"/>
<path d="M640.1 16.2c-.9 1.4-2 2.7-2 3.8a2 2 0 0 0 4 0c0-1.1-1.1-2.4-2-3.8z" fill="#999"/>
<rect x="623" y="24" width="21" height="4" fill="#fff2cc"/>
<path d="M648 17.8h5.5l-2.75 3.6z" fill="#777"/>
<g fill="none" stroke="#444" stroke-width="1.3"><rect x="663.65" y="10.65" width="11.7" height="11.7"/><path d="M669.5 10.65v11.7M663.65 16.5h11.7"/></g>
<path d="M684 15.6h5.5l-2.75 3.6z" fill="#777"/>
<g fill="none" stroke="#c8c8c8" stroke-width="1.2"><path d="M700 10.6h-3.4v11.8h3.4M700 10.6v3M700 22.4v-3M710.4 10.6h3.4v11.8h-3.4M710.4 10.6v3M710.4 22.4v-3"/><path d="M698.5 16.5h4.5M707.5 16.5h4.5"/></g>
<g fill="#c8c8c8"><path d="M704.5 16.5l-2.3-2.3v4.6z"/><path d="M706 16.5l2.3-2.3v4.6z"/></g>
<path d="M722 15.6h5.5l-2.75 3.6z" fill="#c4c4c4"/>
<g fill="#444"><rect x="748" y="10.9" width="14" height="1.1"/><rect x="748" y="12.9" width="10" height="1.1"/><rect x="748" y="14.9" width="14" height="1.1"/><rect x="748" y="16.9" width="10" height="1.1"/><rect x="748" y="18.9" width="14" height="1.1"/><rect x="748" y="20.9" width="10" height="1.1"/></g>
<path d="M770 15.9h5l-2.5 3z" fill="#777"/>
<g fill="#444"><rect x="783" y="16" width="16" height="1"/><rect x="790.1" y="6" width="1.8" height="5.5"/><path d="M788 11h6l-3 3z"/><path d="M788 21.6h6l-3-3z"/><rect x="790.1" y="21.3" width="1.8" height="5.5"/></g>
<path d="M806 15.9h5l-2.5 3z" fill="#777"/>
<g fill="none" stroke="#444" stroke-width="1.4"><path d="M818.7 9.2v13.3M835.7 9.2v13.3"/><path d="M821.4 13h7.6c1.8 0 3.2 1.4 3.2 3.2s-1.4 3.1-3.2 3.1h-1.6" stroke-width="1.6"/><path d="M821.4 19.2h3.3" stroke-width="1.7"/></g>
<path d="M825.3 19.3l3.2-2.5v5z" fill="#444"/>
<path d="M842 15.8h5l-2.5 3.2z" fill="#777"/>
<g fill="none" stroke="#444" stroke-width="1.4" stroke-linecap="round" stroke-linejoin="round"><path d="M860.3 19.3L856.5 10.4L866 13.9M858.8 16.2L862.5 13.3"/><path d="M861.4 23.6L869.8 15.2"/></g><path d="M871.2 13.7L865.9 14.3L870.6 19Z" fill="#444"/>
<path d="M878 15.8h5l-2.5 3.2z" fill="#777"/>
<g fill="none" stroke="#444" stroke-width="1.8"><path d="M908.6 13.95H904.4A2.45 2.45 0 0 0 904.4 18.85H908.6M911.4 13.95H915.6A2.45 2.45 0 0 1 915.6 18.85H911.4"/></g><rect x="906" y="15.75" width="8" height="1.3" fill="#444"/>
<path d="M927 9h18v13.9h-14.8v-11.2z" fill="#444"/>
<g fill="#fff"><rect x="933" y="12" width="9" height="1"/><rect x="933" y="14" width="9" height="1"/><rect x="933" y="16" width="9" height="1"/><rect x="933" y="18" width="6" height="1"/></g>
<g fill="none" stroke="#444" stroke-width="1.2"><rect x="954.5" y="9.5" width="17" height="14"/></g>
<g fill="#f0f0f0" stroke="#444" stroke-width="1"><circle cx="954.5" cy="9.5" r="1.4"/><circle cx="971.5" cy="9.5" r="1.4"/><circle cx="954.5" cy="23.5" r="1.4"/><circle cx="971.5" cy="23.5" r="1.4"/></g>
<g fill="#444"><rect x="957" y="12.2" width="2" height="8.3"/><rect x="961" y="16.2" width="2" height="4.3"/><rect x="965" y="14.1" width="2" height="6.4"/></g>
<path d="M980 11h14.4l-5.5 6.3v5.9h-3.3v-5.9z" fill="#444"/><path d="M983.8 13.2h6.8l-3.4 3.9z" fill="#f0f0f0"/>
<path d="M1004 15.6h5.5l-2.75 3.6z" fill="#777"/>
<path d="M1020.5 9.8h9.6v2.1h-6.5l3.8 4.1-3.8 4.1h6.5v2.1h-9.6v-1.9l4.2-4.3-4.2-4.3z" fill="#444"/>
<path d="M1039.5 15.6h5.5l-2.75 3.6z" fill="#777"/>
</svg><svg class="a" style="left:0;top:0" width="1146" height="713" viewBox="0 0 1146 713">
<defs><filter id="sh" x="-10%" y="-10%" width="130%" height="130%"><feDropShadow dx="0.6" dy="1.2" stdDeviation="0.7" flood-color="#000" flood-opacity="0.45"/></filter></defs>
<g fill="#f50000" filter="url(#sh)">
<polygon points="269.01,207.88 251.64,319.96 254.00,340.00 261.08,321.10 270.99,208.12"/><polygon points="254.00,340.00 269.00,322.06 263.63,317.57 255.55,327.24"/><circle cx="266.32" cy="319.82" r="3.50"/><polygon points="254.00,340.00 243.72,319.00 250.00,315.92 255.55,327.24"/><circle cx="246.86" cy="317.46" r="3.50"/>
<polygon points="784.93,229.68 689.42,292.08 675.00,308.00 694.88,299.86 786.07,231.32"/><polygon points="675.00,308.00 699.96,307.11 699.71,300.11 685.52,300.62"/><circle cx="699.84" cy="303.61" r="3.50"/><polygon points="675.00,308.00 684.34,284.84 690.83,287.45 685.52,300.62"/><circle cx="687.58" cy="286.14" r="3.50"/>
<polygon points="786.04,234.29 793.43,271.66 803.75,289.40 802.52,268.91 787.96,233.71"/><polygon points="803.75,289.40 810.38,266.54 803.66,264.59 800.03,277.10"/><circle cx="807.02" cy="265.56" r="3.50"/><polygon points="803.75,289.40 785.56,274.04 790.08,268.69 800.03,277.10"/><circle cx="787.82" cy="271.37" r="3.50"/>
<polygon points="791.09,235.88 919.51,267.66 939.30,267.10 921.53,258.37 791.51,233.92"/><polygon points="939.30,267.10 923.17,250.82 918.20,255.75 926.74,264.37"/><circle cx="920.69" cy="253.28" r="3.50"/><polygon points="939.30,267.10 917.87,275.21 915.39,268.66 926.74,264.37"/><circle cx="916.63" cy="271.94" r="3.50"/>
<polygon points="568.84,520.03 442.74,484.55 422.60,484.40 440.43,493.77 568.36,521.97"/><polygon points="422.60,484.40 438.49,501.49 443.62,496.72 435.07,487.53"/><circle cx="441.06" cy="499.10" r="3.50"/><polygon points="422.60,484.40 444.67,476.83 446.94,483.45 435.07,487.53"/><circle cx="445.81" cy="480.14" r="3.50"/>
</g>
<g font-family="Liberation Sans" font-weight="bold" font-size="20.5" fill="#ff0000" stroke="#fff" stroke-width="4.2" stroke-linejoin="round" paint-order="stroke" filter="url(#sh)">
<text x="88.4" y="183" textLength="62.8" lengthAdjust="spacingAndGlyphs">Follow</text>
<text x="156.2" y="183" textLength="24.0" lengthAdjust="spacingAndGlyphs">all</text>
<text x="184.2" y="183" textLength="32.9" lengthAdjust="spacingAndGlyphs">the</text>
<text x="221.4" y="183" textLength="40.5" lengthAdjust="spacingAndGlyphs">text</text>
<text x="266.1" y="183" textLength="63.2" lengthAdjust="spacingAndGlyphs">length</text>
<text x="334.1" y="183" textLength="102.0" lengthAdjust="spacingAndGlyphs">conditions</text>
<text x="565.0" y="185" textLength="71.9" lengthAdjust="spacingAndGlyphs">Choose</text>
<text x="641.3" y="185" textLength="34.5" lengthAdjust="spacingAndGlyphs">the</text>
<text x="680.4" y="185" textLength="98.3" lengthAdjust="spacingAndGlyphs">languages</text>
<text x="782.6" y="185" textLength="36.9" lengthAdjust="spacingAndGlyphs">and</text>
<text x="824.2" y="185" textLength="25.0" lengthAdjust="spacingAndGlyphs">fill</text>
<text x="854.9" y="185" textLength="18.8" lengthAdjust="spacingAndGlyphs">in</text>
<text x="878.3" y="185" textLength="24.1" lengthAdjust="spacingAndGlyphs">all</text>
<text x="907.4" y="185" textLength="33.1" lengthAdjust="spacingAndGlyphs">the</text>
<text x="944.6" y="185" textLength="54.1" lengthAdjust="spacingAndGlyphs">fields</text>
<text x="389.5" y="546" textLength="79.9" lengthAdjust="spacingAndGlyphs">Website</text>
<text x="473.8" y="546" textLength="47.8" lengthAdjust="spacingAndGlyphs">links</text>
<text x="526.0" y="546" textLength="18.5" lengthAdjust="spacingAndGlyphs">in</text>
<text x="548.9" y="546" textLength="34.1" lengthAdjust="spacingAndGlyphs">the</text>
<text x="587.7" y="546" textLength="89.9" lengthAdjust="spacingAndGlyphs">following</text>
<text x="683.0" y="546" textLength="67.9" lengthAdjust="spacingAndGlyphs">format</text>
<text x="755.3" y="546" textLength="56.7" lengthAdjust="spacingAndGlyphs">https:</text>
<text x="827.5" y="546" textLength="163.2" lengthAdjust="spacingAndGlyphs">taxistartup.com/</text>
<polygon points="812.2,546 815,546 820.1,532 817.4,532"/><polygon points="820,546 822.8,546 828.1,532 825.4,532"/>
</g></svg></body></html>
